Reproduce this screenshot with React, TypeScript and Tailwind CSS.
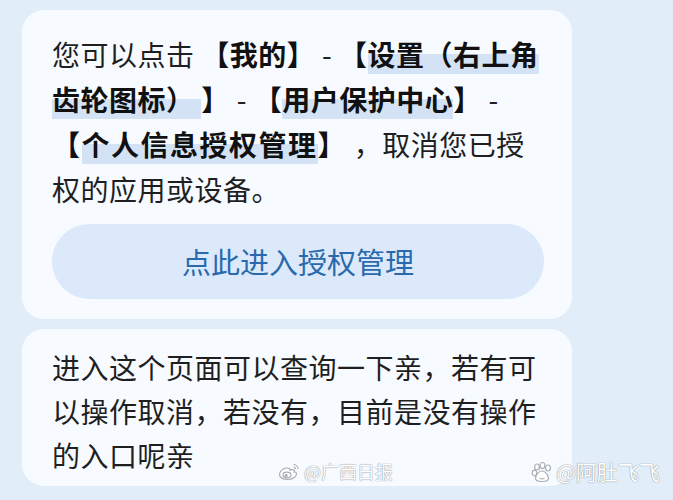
import React from 'react';

// light-blue marker under the lower half of a phrase
const Mark: React.FC<{ children: React.ReactNode; className?: string }> = ({ children, className = '' }) => (
  <span className={`bg-[linear-gradient(to_bottom,transparent_50%,#d4e2f5_50%)] ${className}`}>{children}</span>
);

const WeiboMark: React.FC = () => (
  <svg width="22" height="18" viewBox="0 0 22 18" fill="none" stroke="#a9adb3" strokeWidth="1.2">
    <path d="M9 5C5 5 1.5 8.5 1.5 11.5c0 3 3.5 5 8 5s9-2.5 9-5.5c0-1.8-1.6-2.2-2.4-2 .6-1.6.2-2.8-1.6-2.4L12 7.2C12.4 5.6 11.2 5 9 5z" fill="#fff" />
    <ellipse cx="9" cy="12" rx="4" ry="2.8" />
    <circle cx="8.2" cy="12.4" r="1" />
    <path d="M15.5 1.5c2.5 0 4.5 2 4.5 4.5M15.5 4c1.2 0 2 .8 2 2" />
  </svg>
);

const PawMark: React.FC = () => (
  <svg width="24" height="24" viewBox="0 0 24 24" fill="#fff" stroke="#a9adb3" strokeWidth="1.2">
    <ellipse cx="7" cy="7" rx="2.4" ry="3" />
    <ellipse cx="12.5" cy="5.5" rx="2.4" ry="3" />
    <ellipse cx="18" cy="8" rx="2.4" ry="3" />
    <ellipse cx="4.5" cy="13" rx="2.2" ry="2.8" />
    <path d="M12 11c-3.5 0-6.5 4.5-6.5 7.5 0 2.5 2.5 3 6.5 3s6.5-.5 6.5-3c0-3-3-7.5-6.5-7.5z" />
    <path d="M9.5 18c1.5 1.2 3.5 1.2 5 0" />
  </svg>
);

const App: React.FC = () => {
  return (
    <div className="relative w-[673px] h-[500px] overflow-hidden bg-[#e1eefa] font-['Noto_Sans_CJK_SC','Noto_Sans',sans-serif]">
      <div className="w-[572px] pl-[22px] pt-[10px] flex flex-col gap-[10px]">
        <section className="rounded-[22px] bg-[#f7fbff] pl-[30px] pr-[28px] pt-[22px] pb-[20px]">
          <p className="text-[28px] leading-[45px] text-[#1f1f1f] tracking-[0.5px]">
            您可以点击 <b className="font-bold text-[#111]">【我的】</b> - <b className="font-bold text-[#111]">【<Mark>设置（右上角</Mark></b>
            <br />
            <b className="font-bold text-[#111]"><Mark>齿轮图标） </Mark>】</b> - <b className="font-bold text-[#111]">【<Mark>用户保护中心</Mark>】</b> -
            <br />
            <b className="font-bold text-[#111] tracking-[1.5px]">【<Mark>个人信息授权管理</Mark>】</b> ，取消您已授
            <br />
            权的应用或设备。
          </p>
          <button className="mt-[12px] w-full h-[75px] rounded-full bg-[#dbe9fb] text-[29px] text-[#2a69ad] flex items-center justify-center">
            点此进入授权管理
          </button>
        </section>

        <section className="h-[157px] rounded-[22px] bg-[#f7fbff] pl-[30px] pr-[28px] pt-[16px]">
          <p className="text-[28px] leading-[44px] text-[#1f1f1f] tracking-[0.5px]">
            进入这个页面可以查询一下亲，若有可
            <br />
            以操作取消，若没有，目前是没有操作
            <br />
            的入口呢亲
          </p>
        </section>
      </div>

      <div className="absolute left-[278px] top-[458px] flex items-center gap-[4px] text-[18px] text-white [text-shadow:0_0_1px_#8d9298,0_0_1px_#8d9298]">
        <WeiboMark />
        <span>@广西日报</span>
      </div>
      <div className="absolute left-[530px] top-[456px] flex items-center gap-[2px] text-[21px] text-white [text-shadow:0_0_1px_#8d9298,0_0_1px_#8d9298]">
        <PawMark />
        <span>@阿肚飞飞</span>
      </div>
    </div>
  );
};

export default App;
